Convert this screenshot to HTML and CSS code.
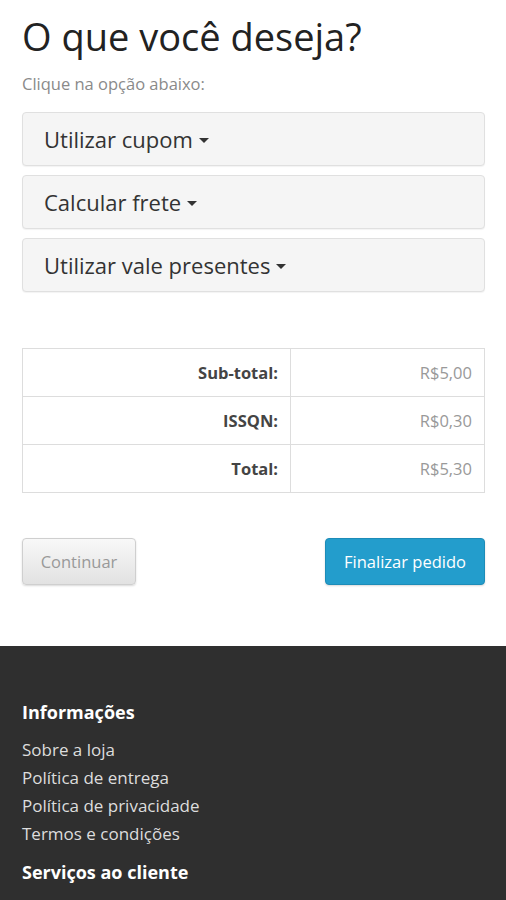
FILE: index.html
```html
<!DOCTYPE html>
<html lang="pt-BR">
  <head>
    <meta charset="utf-8">
    <title>Carrinho</title>
    <link rel="stylesheet" href="styles.css">
  </head>
  <body>

  <div class="page">
    <h1 class="title">O que você deseja?</h1>
    <p class="hint">Clique na opção abaixo:</p>

    <div class="panels">
      <div class="panel">Utilizar cupom <span class="caret"></span></div>
      <div class="panel">Calcular frete <span class="caret"></span></div>
      <div class="panel">Utilizar vale presentes <span class="caret"></span></div>
    </div>

    <table class="totals">
      <tr>
        <td class="label">Sub-total:</td>
        <td class="value">R$5,00</td>
      </tr>
      <tr>
        <td class="label">ISSQN:</td>
        <td class="value">R$0,30</td>
      </tr>
      <tr>
        <td class="label">Total:</td>
        <td class="value">R$5,30</td>
      </tr>
    </table>

    <div class="buttons">
      <a class="btn btn-default">Continuar</a>
      <a class="btn btn-primary">Finalizar pedido</a>
    </div>
  </div>

  <div class="footer">
    <h5>Informações</h5>
    <ul>
      <li>Sobre a loja</li>
      <li>Política de entrega</li>
      <li>Política de privacidade</li>
      <li>Termos e condições</li>
    </ul>
    <h5>Serviços ao cliente</h5>
  </div>

  </body>
</html>
```

FILE: styles.css
```css
html {
  height: 100%;
}
body {
  margin: 0;
  padding: 0;
  background: #ffffff;
  color: #333;
  font-family: "Open Sans", sans-serif;
  font-size: 15px;
}

.page {
  padding: 10px 21px 61px 22px;
}

.title {
  margin: 0;
  font-size: 38px;
  font-weight: normal;
  color: #222;
  line-height: 52px;
}

.hint {
  margin: 10px 0 17px;
  font-size: 16.5px;
  color: #8a8a8a;
}

.panels {
  display: flex;
  flex-direction: column;
  gap: 9px;
}

.panel {
  height: 52px;
  display: flex;
  align-items: center;
  padding-left: 21px;
  background: #f5f5f5;
  border: 1px solid #e0e0e0;
  border-radius: 4px;
  box-shadow: 0 1px 1px rgba(0,0,0,0.05);
  font-size: 22px;
  color: #333;
}

.caret {
  display: inline-block;
  margin-left: 6px;
  margin-top: 3px;
  border-top: 5px solid #333;
  border-left: 5px solid transparent;
  border-right: 5px solid transparent;
}

.totals {
  width: 100%;
  margin-top: 56px;
  border-collapse: collapse;
  font-size: 16.5px;
}
.totals td {
  height: 47px;
  border: 1px solid #ddd;
  text-align: right;
  padding: 0 12px;
}
.totals .label {
  width: 243px;
  font-weight: bold;
  color: #444;
}
.totals .value {
  color: #999;
}

.buttons {
  display: flex;
  justify-content: space-between;
  margin-top: 45px;
}

.btn {
  display: block;
  height: 45px;
  line-height: 45px;
  border-radius: 4px;
  font-size: 16.5px;
  text-align: center;
}
.btn-default {
  width: 112px;
  color: #999;
  background: linear-gradient(#f8f8f8, #e2e2e2);
  border: 1px solid #cfcfcf;
  box-shadow: 0 1px 2px rgba(0,0,0,0.15);
}
.btn-primary {
  width: 158px;
  color: #fff;
  background: #239dcc;
  border: 1px solid #1d8cb8;
  box-shadow: 0 1px 2px rgba(0,0,0,0.15);
}

.footer {
  background: #2f2f2f;
  color: #e0e0e0;
  padding: 54px 22px 20px;
  min-height: 200px;
}
.footer h5 {
  margin: 0;
  font-size: 18px;
  color: #fff;
  line-height: 24px;
}
.footer ul {
  list-style: none;
  margin: 12px 0 12px;
  padding: 0;
}
.footer li {
  font-size: 17px;
  line-height: 28px;
  color: #ddd;
}
```
